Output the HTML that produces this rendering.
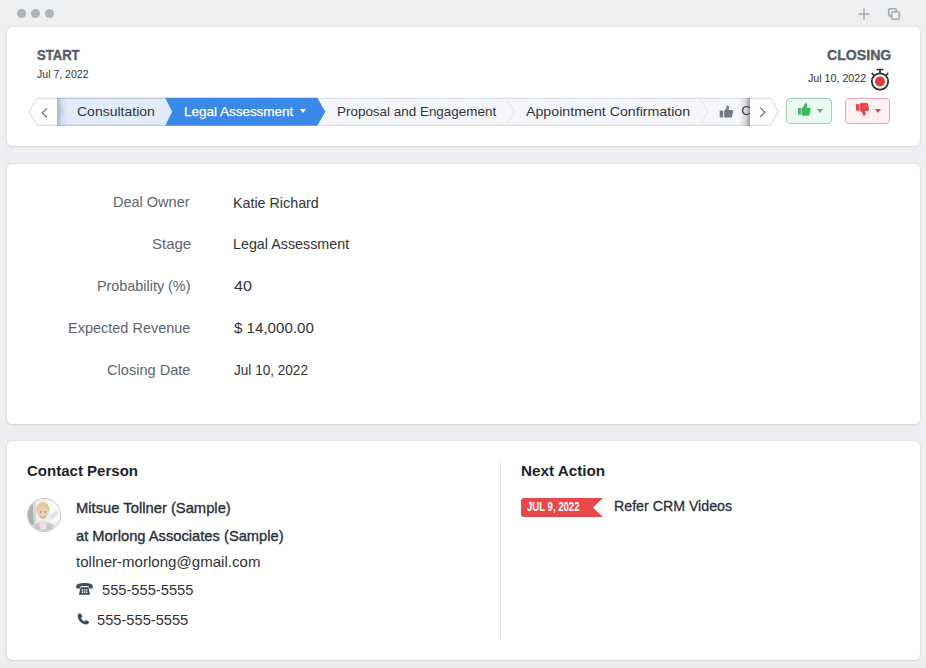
<!DOCTYPE html>
<html lang="en">
<head>
<meta charset="utf-8">
<title>Deal</title>
<style>
*{box-sizing:border-box;margin:0;padding:0}
html,body{width:926px;height:668px;overflow:hidden}
body{background:#eeeff1;font-family:"Liberation Sans",sans-serif;color:#333;position:relative}
.abs{position:absolute;white-space:nowrap}
.card{position:absolute;left:7px;width:913px;background:#fff;border-radius:5px;box-shadow:0 0 2px rgba(120,130,140,.28),0 1px 2px rgba(120,125,135,.12)}
.dot{position:absolute;top:9px;width:9px;height:9px;border-radius:50%;background:#b1b4b6}
.t{position:absolute;white-space:nowrap;transform-origin:0 0}
</style>
</head>
<body>
<!-- window chrome -->
<div class="dot" style="left:17px"></div>
<div class="dot" style="left:31px"></div>
<div class="dot" style="left:45px"></div>
<svg class="abs" style="left:857px;top:7px" width="14" height="14" viewBox="0 0 14 14"><path d="M7 1.400v11.200M1.400 7h11.200" stroke="#a6a9ac" stroke-width="1.600" fill="none"/></svg>
<svg class="abs" style="left:887px;top:7px" width="14" height="14" viewBox="0 0 14 14"><rect x="1.7" y="1.7" width="7.6" height="7.6" rx="1.5" fill="none" stroke="#a6a9ac" stroke-width="1.600"/><rect x="4.7" y="4.7" width="7.6" height="7.6" rx="1.5" fill="#eeeff1" stroke="#a6a9ac" stroke-width="1.600"/></svg>

<div class="abs" style="left:7px;top:27px;width:913px;height:633px;background:#eceef1;border-radius:5px"></div>
<div class="abs" style="left:0;top:663px;width:926px;height:5px;background:linear-gradient(#eeeeef,#e9e9ea)"></div>
<!-- card 1 -->
<div class="card" style="top:27px;height:119px"></div>
<svg class="abs" style="left:867.800px;top:66.600px" width="24" height="26" viewBox="0 0 24 26">
<path d="M12 2.5v3M9.5 2.5h5M4.2 6.5l2 2M19.8 6.5l-2 2" stroke="#2a2a2a" stroke-width="1.7" fill="none" stroke-linecap="round"/>
<circle cx="12" cy="14.5" r="8.2" fill="#fff" stroke="#2a2a2a" stroke-width="1.7"/>
<circle cx="12" cy="14.5" r="5" fill="#e8383d"/>
</svg>

<!-- stage path -->
<svg class="abs" style="left:20px;top:92px" width="770" height="40" viewBox="20 92 770 40">
<rect x="57" y="97.8" width="693" height="27.95" fill="#f5f6fc"/>
<path d="M57 97.8H164.400l7 13.98-7 13.97H57z" fill="#e3ecfb"/>
<path d="M57 97.8l7.500 13.98L57 125.75z" fill="#d3d6f0" opacity=".55"/>
<path d="M57 98.3H750M57 125.25H750" stroke="#d7dae2" stroke-width="1" fill="none"/>
<path d="M57 98.3H165M57 125.25H165" stroke="#bcc3da" stroke-width="1" fill="none"/>
<path d="M164.400 97.8H317.300l8 13.98-8 13.97H164.400l7-13.97z" fill="#3a88e8"/>
<path d="M164.700 97.8l7 13.98-7 13.97" fill="none" stroke="#f4f8ff" stroke-width="1" opacity=".9"/>
<path d="M506.500 98.3l8 13.48-8 13.47" fill="none" stroke="#e3e5ec" stroke-width="1.100"/>
<path d="M700 98.3l8 13.48-8 13.47" fill="none" stroke="#e3e5ec" stroke-width="1.100"/>
<g transform="translate(719.700,105.200) scale(.97)" fill="#747882"><rect x="0" y="5.600" width="3.600" height="7"/><path d="M4.600 5.700c1.700-1.200 2.500-2.900 2.700-5.200.2-.5 2.400-.3 2.400 1.800 0 1-.3 1.900-.7 2.700h3.400c.9 0 1.600.8 1.400 1.700l-1 4.700c-.2.800-.8 1.300-1.600 1.300H4.600z"/></g>
<path d="M57.200 98.3H37.200L29 111.78 37.200 125.25H57.200" fill="#fff" stroke="#d2d5da" stroke-width="1" stroke-linejoin="round"/>
<path d="M46.900 108.300l-4.600 4.600 4.600 4.600" fill="none" stroke="#707070" stroke-width="1.250"/>
<path d="M750 98.3H770.800L778 111.78 770.800 125.25H750" fill="#fff" stroke="#d2d5da" stroke-width="1" stroke-linejoin="round"/>
<path d="M760.300 107.600l4.600 4.600-4.600 4.600" fill="none" stroke="#707070" stroke-width="1.250"/>
</svg>
<div class="abs" style="left:300.300px;top:109.200px;width:0;height:0;border-left:3.300px solid transparent;border-right:3.300px solid transparent;border-top:4.600px solid #fff"></div>
<div class="abs" style="left:740px;top:101px;width:10px;height:20px;overflow:hidden"><div class="t" style="left:1.200px;top:0;font-size:13.500px;line-height:20px;color:#333">C</div></div>
<div class="abs" style="left:57.200px;top:97.8px;width:11px;height:27.95px;background:linear-gradient(to right,rgba(100,105,145,.42),rgba(115,120,165,.16) 38%,rgba(135,140,185,0))"></div>
<div class="abs" style="left:739px;top:97.8px;width:11px;height:27.95px;background:linear-gradient(to left,rgba(93,96,112,.62),rgba(112,116,138,.24) 40%,rgba(138,143,168,0))"></div>

<!-- green/red buttons -->
<div class="abs" style="left:786px;top:98px;width:46px;height:25.700px;border:1px solid #a0cdb4;background:#eafaf2;border-radius:4px"></div>
<svg class="abs" style="left:797.800px;top:103.100px" width="13" height="13" viewBox="0 0 13 13"><g fill="#3dba5b"><rect x="0" y="5.100" width="2.900" height="6.500"/><path d="M3.500 5.600C5 4.600 6.300 2.900 6.900.600 7.100-.100 9.300 0 9.300 1.900c0 1.100-.4 2-.8 2.800h2.900c.8 0 1.400.7 1.200 1.500l-1 5.200c-.2.800-.8 1.300-1.600 1.300H5.500c-.8 0-1.500-.4-2-.8z"/></g></svg>
<div class="abs" style="left:816.600px;top:109.100px;width:0;height:0;border-left:3.500px solid transparent;border-right:3.500px solid transparent;border-top:4px solid #62b07c"></div>
<div class="abs" style="left:845.200px;top:98px;width:44.800px;height:25.700px;border:1px solid #e2a7ae;background:#fff0f1;border-radius:4px"></div>
<svg class="abs" style="left:855.800px;top:103.100px" width="14" height="13" viewBox="0 0 14 13"><g fill="#e5474c" transform="translate(0,12.800) scale(1.040,-1)"><rect x="0" y="5.100" width="2.900" height="6.500"/><path d="M3.500 5.600C5 4.600 6.300 2.900 6.900.600 7.100-.100 9.300 0 9.300 1.900c0 1.100-.4 2-.8 2.800h2.900c.8 0 1.400.7 1.200 1.500l-1 5.200c-.2.800-.8 1.300-1.600 1.300H5.500c-.8 0-1.500-.4-2-.8z"/></g></svg>
<div class="abs" style="left:874.500px;top:109.200px;width:0;height:0;border-left:3.100px solid transparent;border-right:3.100px solid transparent;border-top:4px solid #d5454b"></div>

<!-- card 2 -->
<div class="card" style="top:164px;height:260px"></div>

<!-- card 3 -->
<div class="card" style="top:441px;height:219px"></div>
<div class="abs" style="left:27px;top:498px;width:34px;height:34px;border-radius:50%;border:1px solid #c4c7ca;overflow:hidden;background:#eceeed">
<svg width="32" height="32" viewBox="0 0 34 34" style="display:block"><rect width="34" height="34" fill="#eef0ef"/><path d="M20 0h14v22l-9 4z" fill="#f8f9f9"/><path d="M0 4l5-3 1.500 26L0 30z" fill="#aab1ad"/><path d="M5 2l3-1 1 22-2.500 3z" fill="#d3d7d5"/><path d="M1 34c1-6 5-9 14-9.500 8-.5 14 2 17 9.500z" fill="#d0d2d1"/><path d="M22 17l9-5 2 3-8 8z" fill="#e3e5e4"/><ellipse cx="15.800" cy="11" rx="7" ry="7.800" fill="#e2ca9a"/><ellipse cx="15.800" cy="14.500" rx="5.600" ry="7" fill="#eecdb8"/><path d="M10.500 10.500c1-3.500 7.500-4.500 10.600-.5-3.500-.8-7-.6-10.600.5z" fill="#e6d0a2"/><path d="M13 19q2.800 2.200 5.600 0-2.800 1.100-5.600 0z" fill="#fff" stroke="#c28a7e" stroke-width=".5"/><circle cx="13.400" cy="13.800" r=".7" fill="#7a6256"/><circle cx="18.200" cy="13.800" r=".7" fill="#7a6256"/><path d="M12.300 23h7l1.700 9h-10.400z" fill="#ecdcdb"/><path d="M5 34c1-4 3-6.500 7-8l1 8zM27 34c-.5-4-3-7-7-8l-1 8z" fill="#c3c6c5"/></svg>
</div>
<svg class="abs" style="left:76px;top:583px" width="17" height="12" viewBox="0 0 17 12"><path d="M.2 3.300C.2 1 3.500.1 8.500.1s8.300.9 8.300 3.200v1.500c0 .4-.3.600-.7.600h-2.600c-.4 0-.7-.2-.7-.6V3.600c-1.300-.4-2.800-.5-4.300-.5s-3 .1-4.300.5v1.200c0 .4-.3.600-.7.600H.9c-.4 0-.7-.2-.7-.6z" fill="#3a5060"/><path d="M4.600 4.200h7.800l1.700 7.600H2.900z" fill="#3a5060"/><g fill="#fff"><rect x="5.600" y="6.300" width="1.500" height="1.300"/><rect x="7.750" y="6.300" width="1.500" height="1.300"/><rect x="9.900" y="6.300" width="1.500" height="1.300"/><rect x="5.600" y="8.500" width="1.500" height="1.300"/><rect x="7.750" y="8.500" width="1.500" height="1.300"/><rect x="9.900" y="8.500" width="1.500" height="1.300"/></g></svg>
<svg class="abs" style="left:76.500px;top:612.700px" width="13" height="13" viewBox="0 0 13 13"><path transform="scale(1.020)" d="M2.300.600c.5-.4 1.200-.3 1.600.3l1.100 1.900c.3.500.2 1.100-.2 1.400l-.9.800c.7 1.400 1.800 2.500 3.300 3.300l.8-.9c.4-.4.900-.5 1.400-.2l1.900 1.100c.6.300.7 1 .3 1.600-.7 1-1.700 1.600-2.900 1.400C4.300 10.500 1.400 7.600.7 3.500.500 2.300 1.200 1.300 2.300.600z" fill="#3a5060"/></svg>
<div class="abs" style="left:500px;top:461px;width:1px;height:179px;background:#e6e8eb"></div>
<svg class="abs" style="left:521px;top:498px" width="82" height="19" viewBox="0 0 82 19"><path d="M3 0H82L72 9.500 82 19H3a3 3 0 0 1-3-3V3a3 3 0 0 1 3-3z" fill="#e8474c"/></svg>
<div class="t" style="left:36.9px;top:43.6px;font-size:15.5px;line-height:22px;font-weight:bold;color:#545c6b;-webkit-text-stroke:.4px #545c6b;transform:scaleX(0.8420)">START</div>
<div class="t" style="left:36.6px;top:65.8px;font-size:11.5px;line-height:16px;color:#333;transform:scaleX(0.9162)">Jul 7, 2022</div>
<div class="t" style="left:826.7px;top:43.6px;font-size:15.5px;line-height:22px;font-weight:bold;color:#545c6b;-webkit-text-stroke:.4px #545c6b;transform:scaleX(0.9107)">CLOSING</div>
<div class="t" style="left:807.6px;top:70.0px;font-size:11.5px;line-height:16px;color:#333;transform:scaleX(0.9276)">Jul 10, 2022</div>
<div class="t" style="left:76.9px;top:101.7px;font-size:13.5px;line-height:19px;color:#2f3440;transform:scaleX(1.0371)">Consultation</div>
<div class="t" style="left:183.7px;top:101.7px;font-size:13.5px;line-height:19px;color:#fff;-webkit-text-stroke:.25px #fff;transform:scaleX(0.9974)">Legal Assessment</div>
<div class="t" style="left:336.5px;top:101.7px;font-size:13.5px;line-height:19px;color:#333;transform:scaleX(0.9953)">Proposal and Engagement</div>
<div class="t" style="left:526.1px;top:101.7px;font-size:13.5px;line-height:19px;color:#333;transform:scaleX(1.0517)">Appointment Confirmation</div>
<div class="t" style="left:113.3px;top:191.3px;font-size:15px;line-height:21px;color:#5d6470;transform:scaleX(0.9664)">Deal Owner</div>
<div class="t" style="left:151.7px;top:233.3px;font-size:15px;line-height:21px;color:#5d6470;transform:scaleX(1.0005)">Stage</div>
<div class="t" style="left:97.0px;top:275.3px;font-size:15px;line-height:21px;color:#5d6470;transform:scaleX(0.9579)">Probability (%)</div>
<div class="t" style="left:68.4px;top:317.3px;font-size:15px;line-height:21px;color:#5d6470;transform:scaleX(0.9658)">Expected Revenue</div>
<div class="t" style="left:107.2px;top:358.9px;font-size:15px;line-height:21px;color:#5d6470;transform:scaleX(0.9721)">Closing Date</div>
<div class="t" style="left:232.8px;top:191.7px;font-size:15px;line-height:21px;color:#333;transform:scaleX(0.9527)">Katie Richard</div>
<div class="t" style="left:232.8px;top:233.3px;font-size:15px;line-height:21px;color:#333;transform:scaleX(0.9539)">Legal Assessment</div>
<div class="t" style="left:233.9px;top:275.3px;font-size:15px;line-height:21px;color:#333;transform:scaleX(1.0750)">40</div>
<div class="t" style="left:233.6px;top:317.3px;font-size:15px;line-height:21px;color:#333;transform:scaleX(1.0076)">$ 14,000.00</div>
<div class="t" style="left:233.6px;top:358.9px;font-size:15px;line-height:21px;color:#333;transform:scaleX(0.9051)">Jul 10, 2022</div>
<div class="t" style="left:26.8px;top:460.3px;font-size:15px;line-height:21px;font-weight:bold;color:#1f2329;transform:scaleX(1.0011)">Contact Person</div>
<div class="t" style="left:76.4px;top:497.1px;font-size:15px;line-height:21px;color:#2a2f3a;-webkit-text-stroke:.35px #2a2f3a;transform:scaleX(0.9841)">Mitsue Tollner (Sample)</div>
<div class="t" style="left:76.1px;top:524.8px;font-size:15px;line-height:21px;color:#2a2f3a;-webkit-text-stroke:.35px #2a2f3a;transform:scaleX(0.9806)">at Morlong Associates (Sample)</div>
<div class="t" style="left:76.4px;top:551.3px;font-size:15px;line-height:21px;color:#333;transform:scaleX(1.0046)">tollner-morlong@gmail.com</div>
<div class="t" style="left:102.3px;top:578.8px;font-size:15px;line-height:21px;color:#333;transform:scaleX(0.9780)">555-555-5555</div>
<div class="t" style="left:96.9px;top:608.6px;font-size:15px;line-height:21px;color:#333;transform:scaleX(0.9770)">555-555-5555</div>
<div class="t" style="left:521.2px;top:460.3px;font-size:15px;line-height:21px;font-weight:bold;color:#1f2329;transform:scaleX(1.0162)">Next Action</div>
<div class="t" style="left:527.3px;top:498.0px;font-size:12.5px;line-height:18px;font-weight:bold;color:#fff;transform:scaleX(0.7658)">JUL 9, 2022</div>
<div class="t" style="left:614.3px;top:494.9px;font-size:15px;line-height:21px;color:#2a2f3a;-webkit-text-stroke:.3px #2a2f3a;transform:scaleX(0.9461)">Refer CRM Videos</div>

</body>
</html>
